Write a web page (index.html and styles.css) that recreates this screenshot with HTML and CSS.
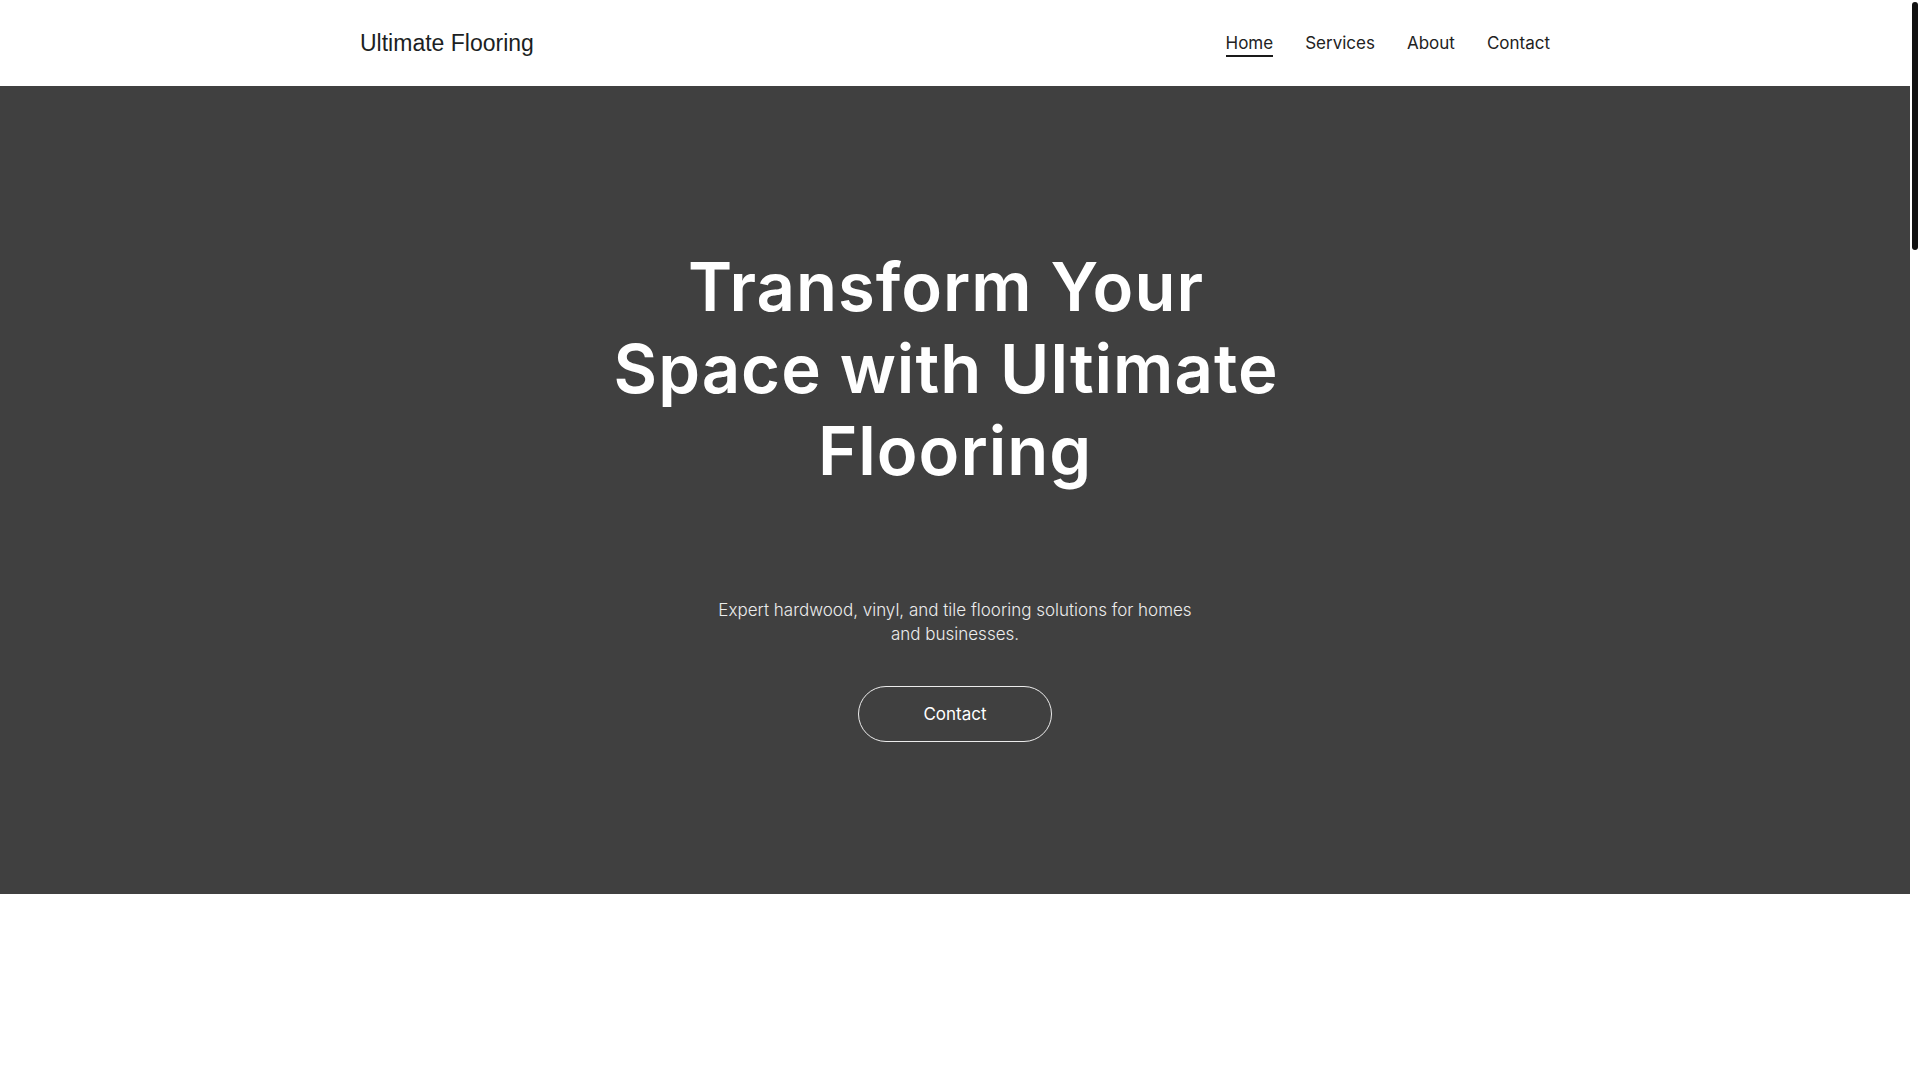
FILE: index.html
```html
<!DOCTYPE html>
<html lang="en">
<head>
<meta charset="utf-8">
<title>Ultimate Flooring</title>
<link rel="stylesheet" href="styles.css">
</head>
<body>
<header class="site-header">
  <div class="container header-inner">
    <a class="logo" href="#">Ultimate Flooring</a>
    <nav class="nav">
      <a class="nav-link active" href="#">Home</a>
      <a class="nav-link" href="#">Services</a>
      <a class="nav-link" href="#">About</a>
      <a class="nav-link" href="#">Contact</a>
    </nav>
  </div>
</header>
<section class="hero">
  <h1 class="hero-title">Transform Your Space with Ultimate Flooring</h1>
  <p class="hero-text">Expert hardwood, vinyl, and tile flooring solutions for homes and businesses.</p>
  <a class="hero-btn" href="#">Contact</a>
</section>
<section class="below"></section>
<div class="scroll-thumb" aria-hidden="true"></div>
</body>
</html>
```
FILE: styles.css
```css
* {
  box-sizing: border-box;
}
html {
  overflow: hidden;
}
body {
  margin: 0;
  padding-right: 10px;
  font-family: Inter, "Noto Sans", sans-serif;
  color: #222222;
  background: #ffffff;
}
a {
  text-decoration: none;
  color: inherit;
}
.container {
  width: 1190px;
  margin: 0 auto;
}
.site-header {
  height: 86px;
  background: #ffffff;
}
.header-inner {
  height: 100%;
  display: flex;
  align-items: center;
  justify-content: space-between;
}
.logo {
  font-family: "Liberation Sans", Arial, sans-serif;
  font-size: 23px;
  color: #1c1f23;
}
.nav {
  display: flex;
  gap: 32px;
  padding-top: 2px;
}
.nav-link {
  display: block;
  font-size: 17px;
  line-height: 24px;
  color: #222222;
  border-bottom: 2px solid transparent;
}
.nav-link.active {
  border-bottom-color: #1a1a1a;
}
.hero {
  height: 808px;
  background: #404040;
  color: #ffffff;
  display: flex;
  flex-direction: column;
  align-items: center;
  padding-top: 160px;
}
.hero-title {
  margin: 0;
  max-width: 720px;
  font-size: 67px;
  line-height: 82px;
  font-weight: 600;
  letter-spacing: 1px;
  text-align: center;
  white-space: break-spaces;
}
.hero-text {
  margin: 106px 0 0;
  max-width: 490px;
  font-size: 17px;
  line-height: 24px;
  font-weight: 300;
  text-align: center;
  color: #ececec;
}
.hero-btn {
  margin-top: 40px;
  width: 194px;
  height: 56px;
  display: flex;
  align-items: center;
  justify-content: center;
  border: 1px solid rgba(255, 255, 255, 0.9);
  border-radius: 28px;
  font-size: 17px;
  font-weight: 400;
  color: #ffffff;
}
.below {
  height: 186px;
  background: #ffffff;
}
.scroll-thumb {
  position: fixed;
  top: 2px;
  right: 2px;
  width: 6px;
  height: 248px;
  border-radius: 3px;
  background: #111111;
}
```
